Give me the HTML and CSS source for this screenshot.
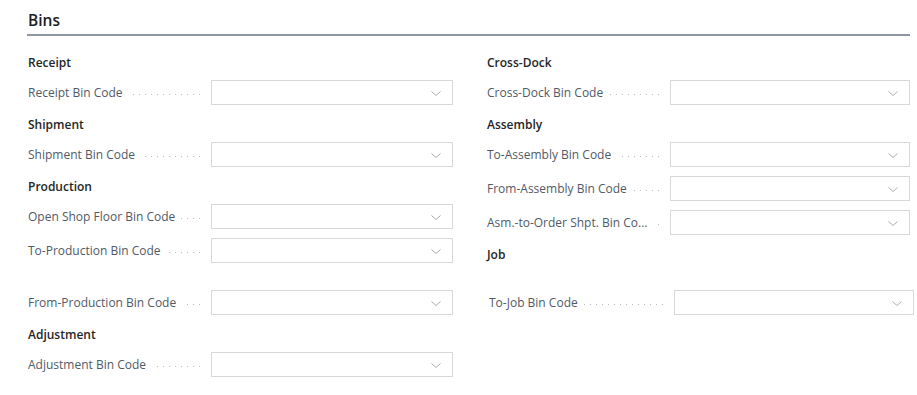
FILE: index.html
```html
<!DOCTYPE html>
<html lang="en">
<head>
    <meta charset="UTF-8">
    <meta name="viewport" content="width=device-width, initial-scale=1.0">
    <title>Bins</title>
    <link rel="stylesheet" href="styles.css">
</head>
<body>

    <div class="fasttab">
        <h2 class="fasttab-title">Bins</h2>

        <div class="columns">
            <div class="column column-left">
                <h3 class="group-title">Receipt</h3>
                <div class="field">
                    <span class="caption">Receipt Bin Code</span><span class="leader"></span>
                    <div class="combo"><svg class="chevron" viewBox="0 0 10 5"><polyline points="0.5,0.5 5,4.5 9.5,0.5"/></svg></div>
                </div>

                <h3 class="group-title">Shipment</h3>
                <div class="field">
                    <span class="caption">Shipment Bin Code</span><span class="leader"></span>
                    <div class="combo"><svg class="chevron" viewBox="0 0 10 5"><polyline points="0.5,0.5 5,4.5 9.5,0.5"/></svg></div>
                </div>

                <h3 class="group-title">Production</h3>
                <div class="field">
                    <span class="caption">Open Shop Floor Bin Code</span><span class="leader"></span>
                    <div class="combo"><svg class="chevron" viewBox="0 0 10 5"><polyline points="0.5,0.5 5,4.5 9.5,0.5"/></svg></div>
                </div>
                <div class="field">
                    <span class="caption">To-Production Bin Code</span><span class="leader"></span>
                    <div class="combo"><svg class="chevron" viewBox="0 0 10 5"><polyline points="0.5,0.5 5,4.5 9.5,0.5"/></svg></div>
                </div>
                <div class="field field-spaced">
                    <span class="caption">From-Production Bin Code</span><span class="leader"></span>
                    <div class="combo"><svg class="chevron" viewBox="0 0 10 5"><polyline points="0.5,0.5 5,4.5 9.5,0.5"/></svg></div>
                </div>

                <h3 class="group-title">Adjustment</h3>
                <div class="field">
                    <span class="caption">Adjustment Bin Code</span><span class="leader"></span>
                    <div class="combo"><svg class="chevron" viewBox="0 0 10 5"><polyline points="0.5,0.5 5,4.5 9.5,0.5"/></svg></div>
                </div>
            </div>

            <div class="column column-right">
                <h3 class="group-title">Cross-Dock</h3>
                <div class="field">
                    <span class="caption">Cross-Dock Bin Code</span><span class="leader"></span>
                    <div class="combo"><svg class="chevron" viewBox="0 0 10 5"><polyline points="0.5,0.5 5,4.5 9.5,0.5"/></svg></div>
                </div>

                <h3 class="group-title">Assembly</h3>
                <div class="field">
                    <span class="caption">To-Assembly Bin Code</span><span class="leader"></span>
                    <div class="combo"><svg class="chevron" viewBox="0 0 10 5"><polyline points="0.5,0.5 5,4.5 9.5,0.5"/></svg></div>
                </div>
                <div class="field">
                    <span class="caption">From-Assembly Bin Code</span><span class="leader"></span>
                    <div class="combo"><svg class="chevron" viewBox="0 0 10 5"><polyline points="0.5,0.5 5,4.5 9.5,0.5"/></svg></div>
                </div>
                <div class="field">
                    <span class="caption" title="Asm.-to-Order Shpt. Bin Code">Asm.-to-Order Shpt. Bin Co...</span><span class="leader"></span>
                    <div class="combo"><svg class="chevron" viewBox="0 0 10 5"><polyline points="0.5,0.5 5,4.5 9.5,0.5"/></svg></div>
                </div>

                <h3 class="group-title">Job</h3>
                <div class="field field-job">
                    <span class="caption">To-Job Bin Code</span><span class="leader"></span>
                    <div class="combo"><svg class="chevron" viewBox="0 0 10 5"><polyline points="0.5,0.5 5,4.5 9.5,0.5"/></svg></div>
                </div>
            </div>
        </div>
    </div>

</body>
</html>
```

FILE: styles.css
```css
body {
    margin: 0;
    font-family: "Open Sans", "Noto Sans", Arial, sans-serif;
    background-color: #fff;
    color: #212121;
    overflow: hidden;
}
.fasttab {
    padding: 0 7px 0 27px;
}
.fasttab-title {
    margin: 0;
    padding: 11px 0 5px 1px;
    font-size: 15.5px;
    font-weight: 600;
    line-height: 18px;
    border-bottom: 2px solid #8e95a3;
}
.columns {
    display: flex;
    gap: 34px;
    padding: 17px 0 0 1px;
}
.column {
    display: flex;
    flex-direction: column;
}
.column-left {
    width: 425px;
}
.column-right {
    width: 423px;
}
.group-title {
    margin: 10px 0 7px 0;
    font-size: 12px;
    font-weight: 600;
    line-height: 20px;
    color: #262626;
}
.group-title:first-child {
    margin-top: 0;
}
.field {
    display: flex;
    align-items: center;
    height: 25px;
}
.field + .field {
    margin-top: 9px;
}
.field-spaced {
    margin-top: 27px !important;
}
.field-job {
    margin-top: 18px;
    margin-left: 2px;
    margin-right: -4px;
}
.caption {
    font-size: 12px;
    color: #505a66;
    white-space: nowrap;
}
.leader {
    flex: 1;
    height: 1px;
    margin: 3px 11px 0 6px;
    background-image: repeating-linear-gradient(to left, #b9bec6 0 1px, transparent 1px 6px);
}
.combo {
    position: relative;
    width: 242px;
    height: 25px;
    box-sizing: border-box;
    border: 1px solid #d6d8dc;
    background-color: #fff;
}
.column-right .combo {
    width: 240px;
}
.chevron {
    position: absolute;
    right: 11px;
    top: 10px;
    width: 10px;
    height: 5px;
    fill: none;
    stroke: #a9adb3;
    stroke-width: 1;
}
```
